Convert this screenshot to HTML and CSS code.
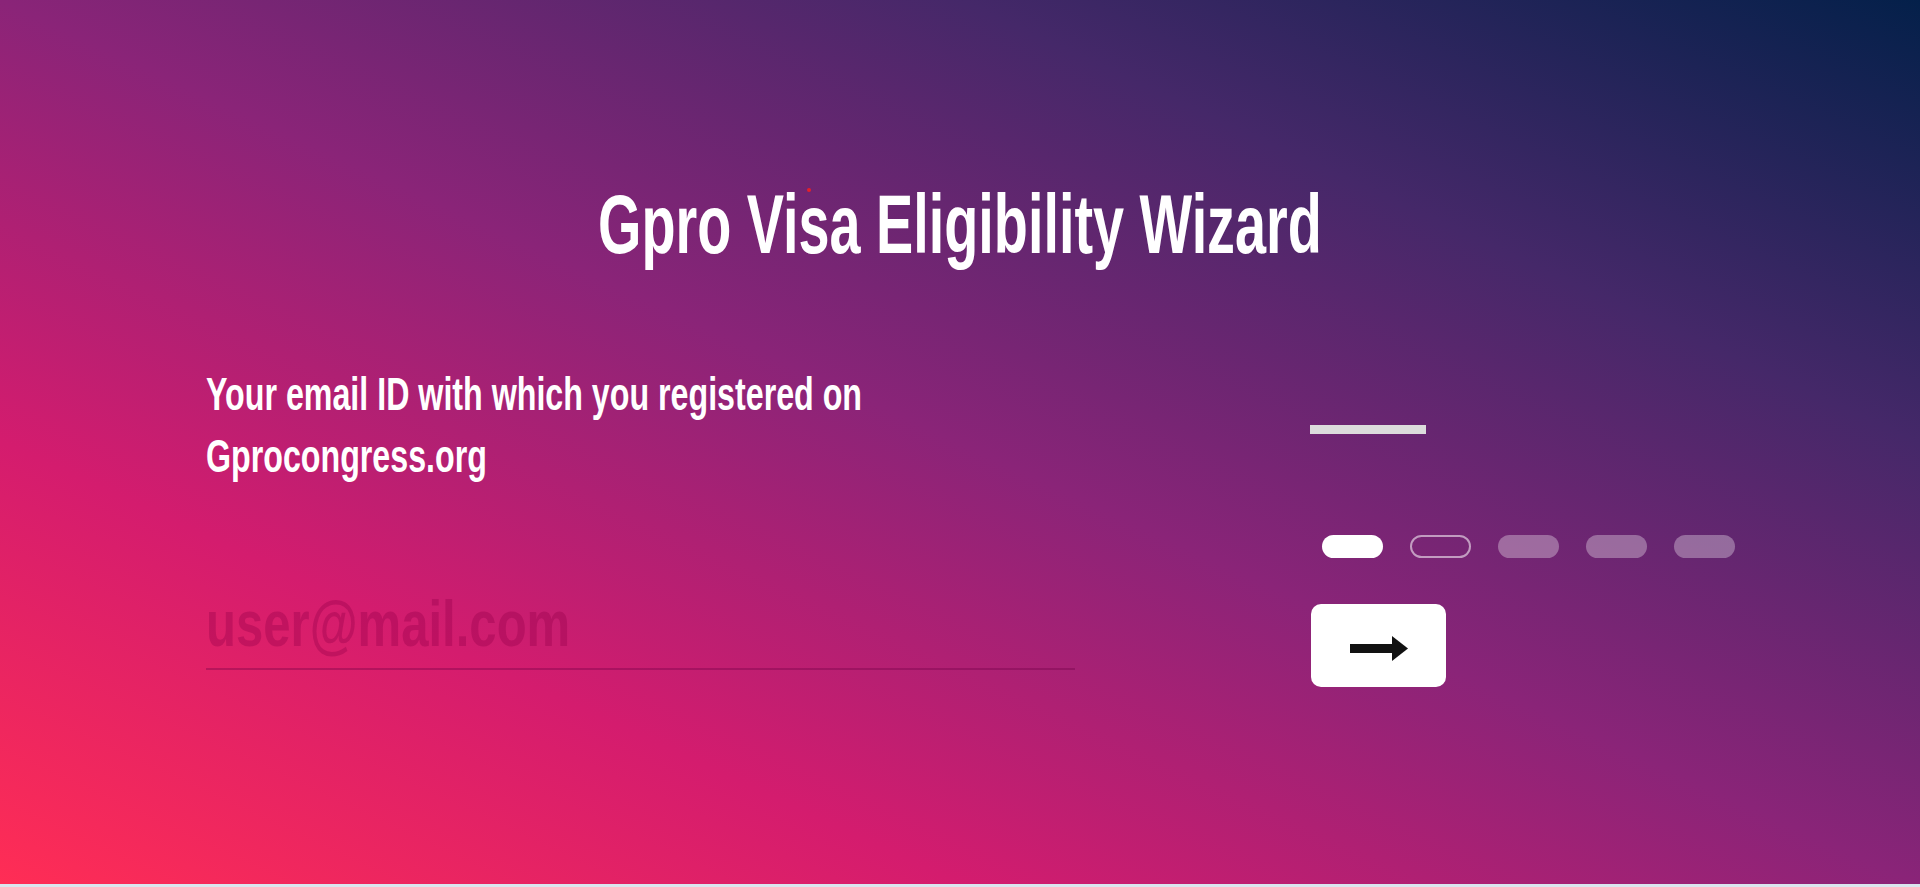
FILE: index.html
```html
<!DOCTYPE html>
<html lang="en">
<head>
<meta charset="utf-8">
<title>Gpro Visa Eligibility Wizard</title>
<link rel="stylesheet" href="styles.css">
</head>
<body>
<main class="wizard">
  <span class="marker"></span>
  <h1 class="title"><span class="squeeze">Gpro Visa Eligibility Wizard</span></h1>
  <section class="step">
    <div class="question">
      <label class="label" for="email"><span class="squeeze-left">Your email ID with which you registered on<br>Gprocongress.org</span></label>
      <div class="field">
        <input class="input" id="email" type="email" placeholder="user@mail.com">
      </div>
    </div>
    <div class="side">
      <div class="bar"></div>
      <div class="pills">
        <span class="pill pill-active"></span>
        <span class="pill pill-current"></span>
        <span class="pill"></span>
        <span class="pill"></span>
        <span class="pill"></span>
      </div>
      <button class="next" type="button" aria-label="Next">
        <svg width="58" height="25" viewBox="0 0 58 25"><rect x="0" y="8" width="44" height="9" fill="#111"/><polygon points="42,0 58,12.5 42,25" fill="#111"/></svg>
      </button>
    </div>
  </section>
</main>
</body>
</html>
```
FILE: styles.css
```css
html, body {
  margin: 0;
  padding: 0;
}
body {
  background: #dae6ee;
  font-family: "Liberation Sans", Arial, sans-serif;
  overflow: hidden;
}
.wizard {
  position: relative;
  height: 884px;
  box-sizing: border-box;
  padding-top: 182px;
  background: linear-gradient(to top right, #ff2d55 0%, #d41c6e 25%, #8a2478 50%, #452869 75%, #04204a 100%);
  color: #fff;
}
.marker {
  position: absolute;
  left: 807px;
  top: 188px;
  width: 4px;
  height: 4px;
  border-radius: 50%;
  background: #e5202a;
}
.title {
  margin: 0;
  text-align: center;
  font-size: 84px;
  line-height: 84px;
  font-weight: 700;
  white-space: nowrap;
}
.squeeze {
  display: inline-block;
  transform: scaleX(0.664);
  transform-origin: center;
}
.step {
  display: flex;
  padding-left: 206px;
  margin-top: 97px;
}
.question {
  width: 869px;
}
.label {
  display: block;
  font-size: 46px;
  line-height: 62px;
  font-weight: 700;
  white-space: nowrap;
}
.squeeze-left {
  display: inline-block;
  transform: scaleX(0.70);
  transform-origin: left;
}
.field {
  margin-top: 96px;
  padding-bottom: 5px;
  border-bottom: 2px solid rgba(110, 0, 70, 0.35);
}
.input {
  display: block;
  box-sizing: border-box;
  width: 1151px;
  height: 80px;
  padding: 0;
  border: 0;
  outline: none;
  background: transparent;
  font-family: "Liberation Sans", Arial, sans-serif;
  font-weight: 700;
  font-size: 65px;
  color: #fff;
  transform: scaleX(0.755);
  transform-origin: left;
}
.input::placeholder {
  color: rgba(150, 0, 75, 0.36);
}
.side {
  margin-left: 235px;
  padding-top: 62px;
  width: 430px;
}
.bar {
  width: 116px;
  height: 9px;
  background: #dcdcdc;
}
.pills {
  display: flex;
  gap: 27px;
  margin-top: 101px;
  padding-left: 12px;
}
.pill {
  width: 61px;
  height: 23px;
  box-sizing: border-box;
  border-radius: 12px;
  background: rgba(255, 255, 255, 0.32);
}
.pill-active {
  background: #fff;
}
.pill-current {
  background: transparent;
  border: 2px solid rgba(255, 255, 255, 0.55);
}
.next {
  display: flex;
  align-items: center;
  justify-content: center;
  margin-top: 46px;
  margin-left: 1px;
  width: 135px;
  height: 83px;
  padding: 6px 0 0;
  border: 0;
  border-radius: 10px;
  background: #fff;
  cursor: pointer;
}
```
